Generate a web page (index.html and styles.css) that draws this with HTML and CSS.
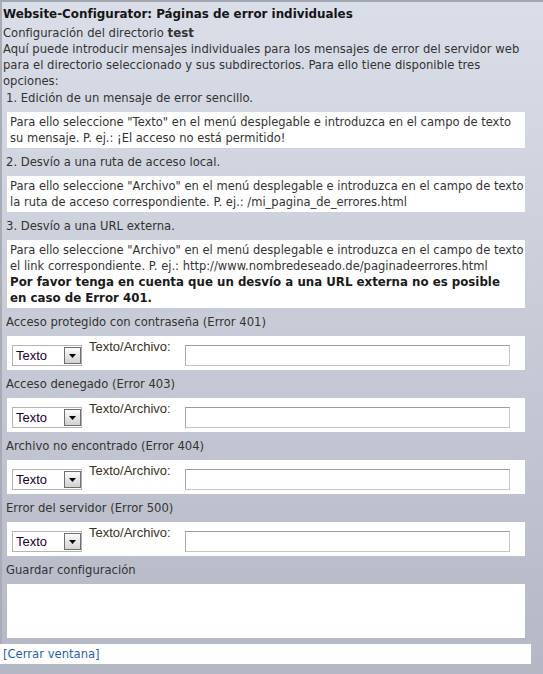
FILE: index.html
```html
<!DOCTYPE html>
<html lang="es">
<head>
    <meta charset="UTF-8">
    <meta name="viewport" content="width=device-width, initial-scale=1.0">
    <title>Website-Configurator: Páginas de error individuales</title>
    <link rel="stylesheet" href="styles.css">
</head>
<body>
    <div class="panel">
        <h1 class="title">Website-Configurator: Páginas de error individuales</h1>
        <p class="intro">
            Configuración del directorio <b>test</b><br>
            Aquí puede introducir mensajes individuales para los mensajes de error del servidor web<br>
            para el directorio seleccionado y sus subdirectorios. Para ello tiene disponible tres<br>
            opciones:
        </p>

        <h2 class="step first">1. Edición de un mensaje de error sencillo.</h2>
        <div class="note">
            Para ello seleccione "Texto" en el menú desplegable e introduzca en el campo de texto<br>
            su mensaje. P. ej.: ¡El acceso no está permitido!
        </div>

        <h2 class="step">2. Desvío a una ruta de acceso local.</h2>
        <div class="note">
            Para ello seleccione "Archivo" en el menú desplegable e introduzca en el campo de texto<br>
            la ruta de acceso correspondiente. P. ej.: /mi_pagina_de_errores.html
        </div>

        <h2 class="step">3. Desvío a una URL externa.</h2>
        <div class="note">
            Para ello seleccione "Archivo" en el menú desplegable e introduzca en el campo de texto<br>
            el link correspondiente. P. ej.: http://www.nombredeseado.de/paginadeerrores.html<br>
            <strong>Por favor tenga en cuenta que un desvío a una URL externa no es posible<br>
            en caso de Error 401.</strong>
        </div>

        <form class="error-form" onsubmit="return false">
            <h2 class="step">Acceso protegido con contraseña (Error 401)</h2>
            <div class="row">
                <span class="select-wrap">
                    <select class="type-select" name="type401">
                        <option>Texto</option>
                        <option>Archivo</option>
                    </select>
                    <span class="select-btn"><svg width="7" height="4" viewBox="0 0 7 4"><path d="M0 0h7L3.5 4z"/></svg></span>
                </span>
                <label class="field-label" for="val401">Texto/Archivo:</label>
                <input class="field-input" type="text" id="val401" name="val401">
            </div>

            <h2 class="step">Acceso denegado (Error 403)</h2>
            <div class="row">
                <span class="select-wrap">
                    <select class="type-select" name="type403">
                        <option>Texto</option>
                        <option>Archivo</option>
                    </select>
                    <span class="select-btn"><svg width="7" height="4" viewBox="0 0 7 4"><path d="M0 0h7L3.5 4z"/></svg></span>
                </span>
                <label class="field-label" for="val403">Texto/Archivo:</label>
                <input class="field-input" type="text" id="val403" name="val403">
            </div>

            <h2 class="step">Archivo no encontrado (Error 404)</h2>
            <div class="row">
                <span class="select-wrap">
                    <select class="type-select" name="type404">
                        <option>Texto</option>
                        <option>Archivo</option>
                    </select>
                    <span class="select-btn"><svg width="7" height="4" viewBox="0 0 7 4"><path d="M0 0h7L3.5 4z"/></svg></span>
                </span>
                <label class="field-label" for="val404">Texto/Archivo:</label>
                <input class="field-input" type="text" id="val404" name="val404">
            </div>

            <h2 class="step">Error del servidor (Error 500)</h2>
            <div class="row">
                <span class="select-wrap">
                    <select class="type-select" name="type500">
                        <option>Texto</option>
                        <option>Archivo</option>
                    </select>
                    <span class="select-btn"><svg width="7" height="4" viewBox="0 0 7 4"><path d="M0 0h7L3.5 4z"/></svg></span>
                </span>
                <label class="field-label" for="val500">Texto/Archivo:</label>
                <input class="field-input" type="text" id="val500" name="val500">
            </div>

            <h2 class="step">Guardar configuración</h2>
            <div class="save-box"></div>
        </form>
    </div>

    <div class="footer">
        <a href="#" class="close-link">[Cerrar ventana]</a>
    </div>
</body>
</html>
```

FILE: styles.css
```css
html {
    height: 100%;
}
body {
    margin: 0;
    min-height: 100%;
    font-family: "DejaVu Sans", Verdana, sans-serif;
    font-size: 11.6px;
    line-height: 16px;
    color: #333;
    background: linear-gradient(#dadee8, #b4b8c5);
}
b, strong {
    font-size: 11.8px;
}
.panel {
    border-top: 2px solid #a2a6b1;
    border-left: 2px solid #a8acb7;
    padding-bottom: 6px;
}
.title {
    margin: 4px 0 0;
    padding-left: 1px;
    font-size: 11.9px;
    line-height: 16px;
    color: #151515;
}
.intro {
    margin: 3px 0 0;
    padding-left: 1px;
    white-space: nowrap;
}
.step {
    margin: 6px 0;
    padding-left: 4px;
    font-size: 11.6px;
    font-weight: normal;
    line-height: 16px;
}
.step.first {
    margin-top: 1px;
}
.note {
    width: 518px;
    box-sizing: border-box;
    margin-left: 5px;
    padding: 2px 3px;
    font-size: 11.5px;
    white-space: nowrap;
    background-color: #fff;
}
.note strong {
    color: #1a1a1a;
}
.error-form {
    margin: 0;
}
.row {
    display: flex;
    align-items: flex-start;
    width: 518px;
    height: 34px;
    box-sizing: border-box;
    margin-left: 5px;
    padding: 3px 0 4px 5px;
    background-color: #fff;
}
.select-wrap {
    position: relative;
    display: block;
    margin-top: 6px;
}
.type-select {
    display: block;
    width: 70px;
    height: 21px;
    box-sizing: border-box;
    margin: 0;
    padding: 0 0 0 3px;
    border: 1px solid #b4b4b4;
    border-radius: 0;
    background: #fff;
    font-family: "Liberation Sans", Arial, sans-serif;
    font-size: 13px;
    color: #220033;
    appearance: none;
    -webkit-appearance: none;
}
.select-btn {
    position: absolute;
    top: 2px;
    right: 1px;
    width: 17px;
    height: 17px;
    box-sizing: border-box;
    border: 1px solid #6e6e6e;
    background: linear-gradient(#fbfbfb, #d2d2d2);
    display: flex;
    align-items: center;
    justify-content: center;
    pointer-events: none;
}
.select-btn svg {
    fill: #000;
}
.field-label {
    margin-left: 7px;
    font-family: "Liberation Sans", Arial, sans-serif;
    font-size: 13px;
    line-height: 16px;
    color: #3a3222;
}
.field-input {
    width: 325px;
    height: 21px;
    box-sizing: border-box;
    margin: 6px 0 0 14px;
    padding: 0 3px;
    border: 1px solid #c4c4c4;
    border-top-color: #9c9c9c;
    border-left-color: #acacac;
    background: #fff;
}
.save-box {
    width: 518px;
    height: 54px;
    margin-left: 5px;
    background-color: #fff;
}
.footer {
    width: 531px;
    height: 20px;
    box-sizing: border-box;
    padding: 2px 3px;
    background-color: #fff;
}
.close-link {
    color: #1f5fae;
    text-decoration: none;
}
```
